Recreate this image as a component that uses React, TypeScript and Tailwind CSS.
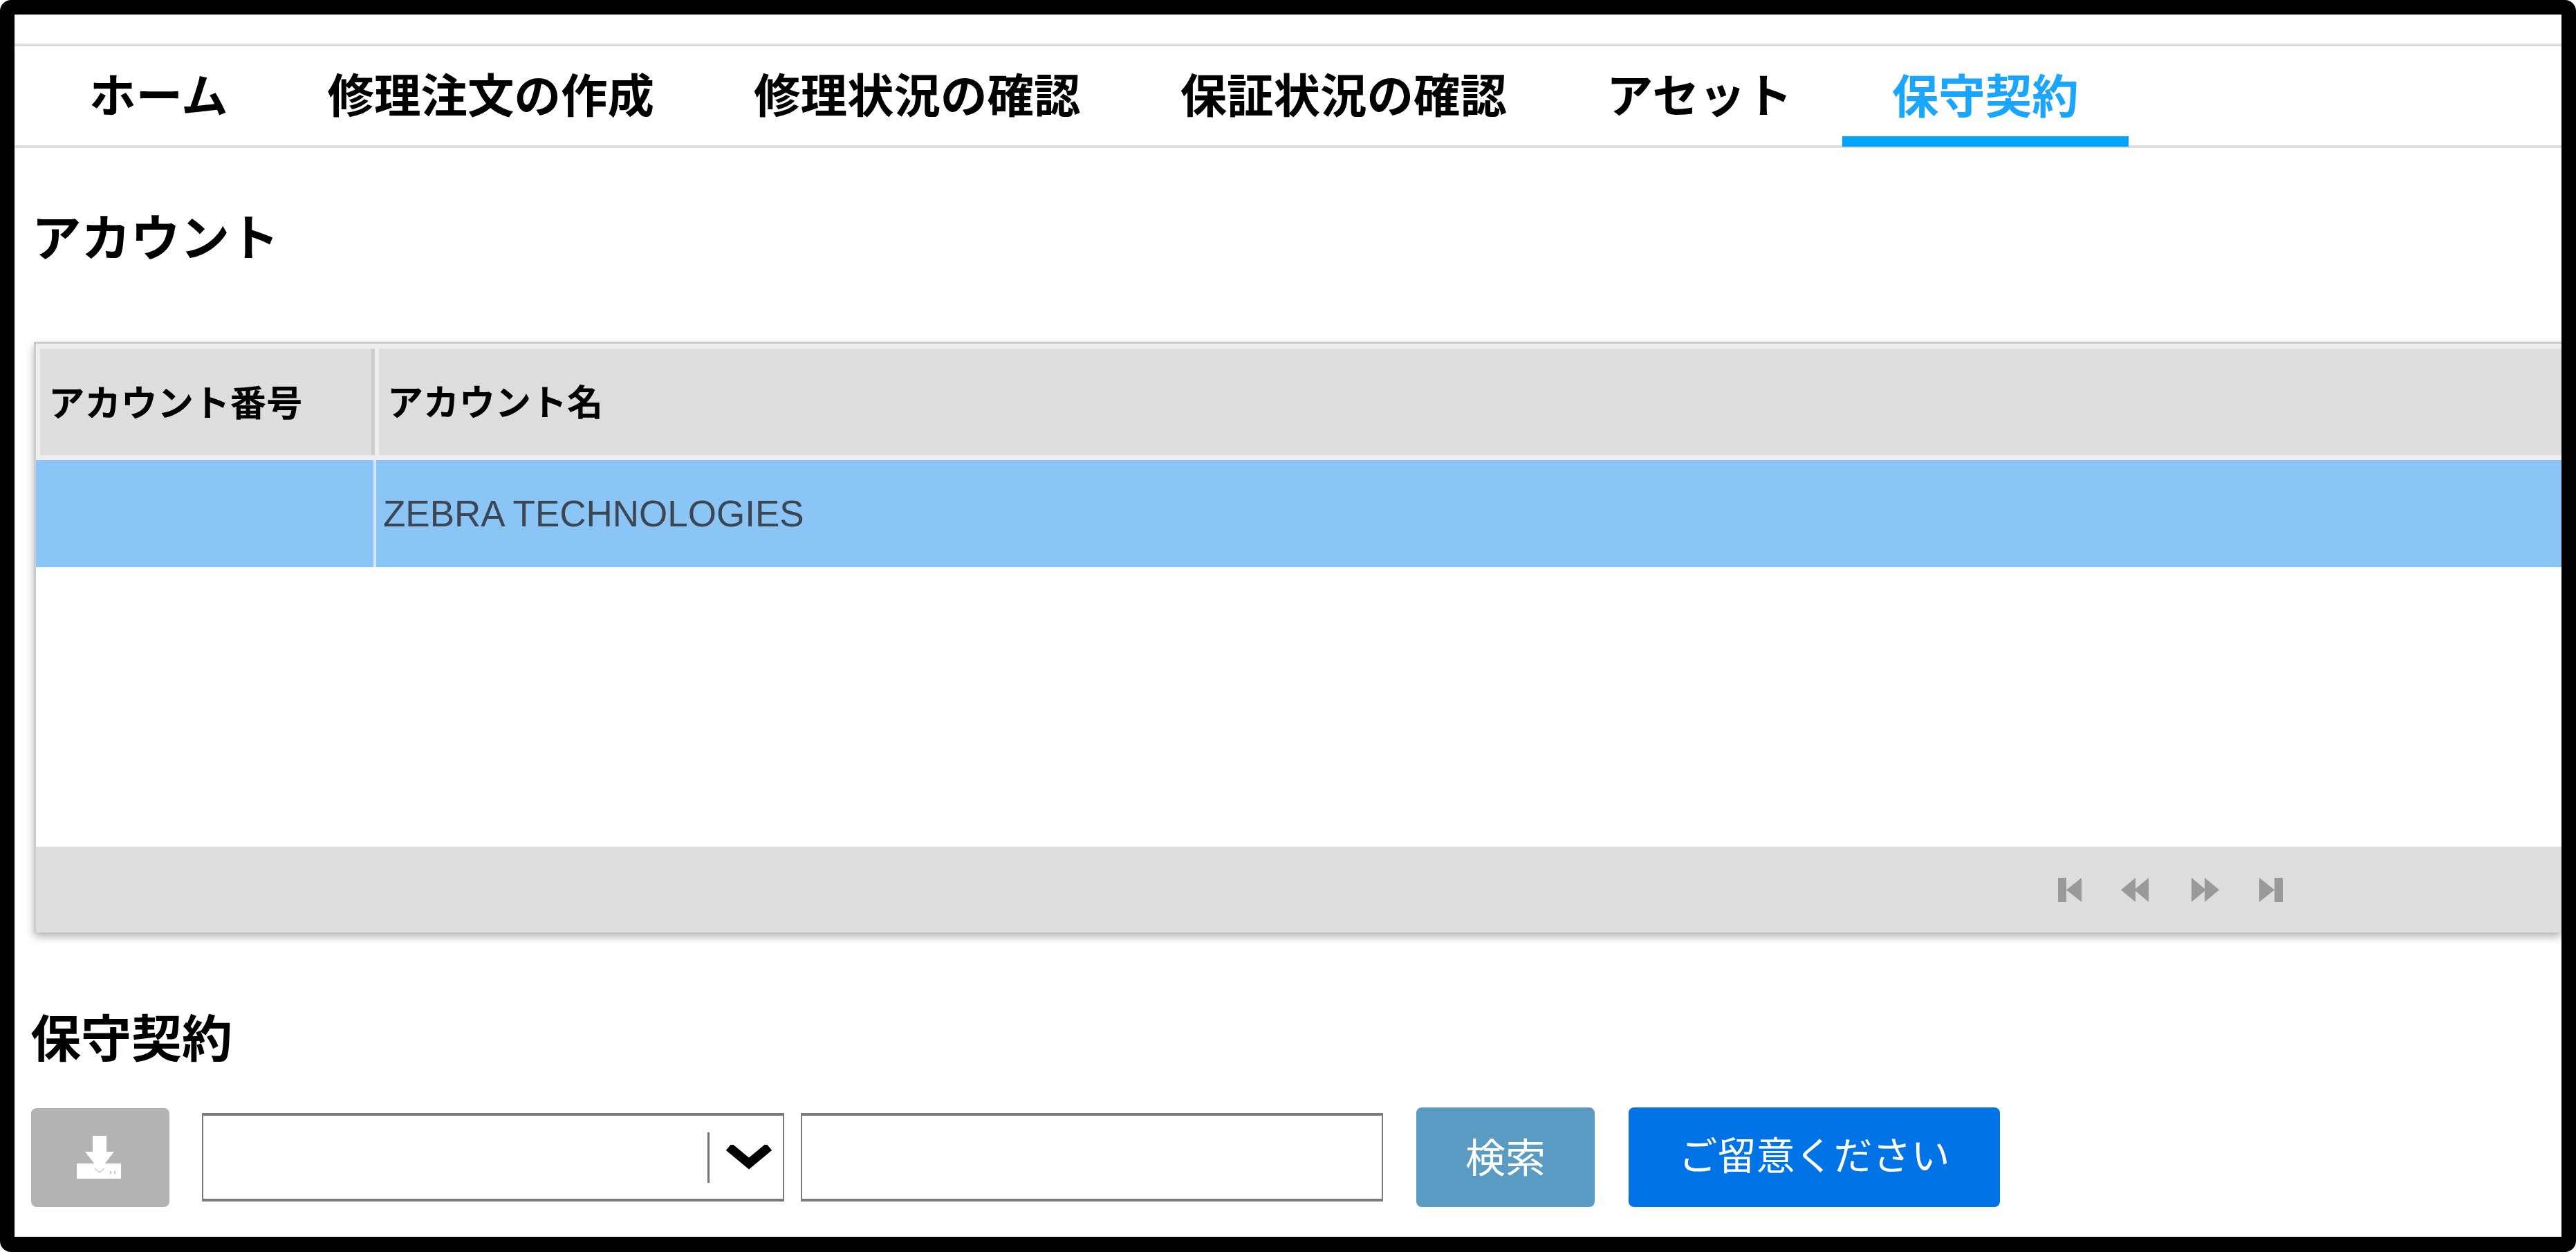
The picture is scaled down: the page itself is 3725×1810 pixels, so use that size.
const cjk = "font-['Noto_Sans_CJK_JP','Noto_Sans',sans-serif]";

const tabs = ["ホーム", "修理注文の作成", "修理状況の確認", "保証状況の確認", "アセット", "保守契約"];

function PagerIcon({ kind }: { kind: "first" | "prev" | "next" | "last" }) {
  // all four are drawn pointing left, the last two get mirrored
  const flip = kind === "next" || kind === "last";
  const single = kind === "first" || kind === "last";
  return (
    <svg
      width={single ? 34 : 40}
      height="35"
      viewBox={single ? "0 0 34 35" : "0 0 40 35"}
      className={flip ? "-scale-x-100" : ""}
      fill="#999999"
    >
      {single ? (
        <>
          <rect x="0" y="0" width="12" height="35" />
          <path d="M34 0 V35 L12 17.5 Z" />
        </>
      ) : (
        <>
          <path d="M21 0 V35 L0 17.5 Z" />
          <path d="M40 0 V35 L19 17.5 Z" />
        </>
      )}
    </svg>
  );
}

function DownloadIcon() {
  return (
    <svg width="64" height="62" viewBox="0 0 64 62">
      <rect x="0" y="40" width="64" height="22" fill="#ffffff" />
      <path d="M23 0 H43 V23 H54 L33 50 L12 23 H23 Z" fill="#ffffff" />
      <path d="M26 47 L33 53 L40 47" fill="none" stroke="#d4d4d4" strokeWidth="2" />
      <rect x="48" y="51" width="2" height="4" fill="#c4c4c4" />
      <rect x="54" y="51" width="2" height="4" fill="#c4c4c4" />
    </svg>
  );
}

export default function App() {
  return (
    <div className={`h-[1810px] w-[3725px] overflow-hidden rounded-[16px] bg-black pt-[21px] pr-[21px] pb-[22px] pl-[21px] ${cjk}`}>
      <div className="flex h-full flex-col overflow-hidden bg-white">
        {/* top nav */}
        <div className="mt-[42px] flex h-[151px] border-y-[4px] border-[#dedede] pl-[36px]">
          {tabs.map((t, i) => (
            <a
              key={t}
              className={
                i === 5
                  ? "-mb-[2px] flex h-[145px] items-center border-b-[15px] border-[#00a4ff] px-[72px] pt-[5px] text-[67.5px] leading-none font-bold text-[#1aa5ff]"
                  : "flex h-[143px] items-center px-[72px] pb-[10px] text-[67.5px] leading-none font-bold text-black"
              }
            >
              {t}
            </a>
          ))}
        </div>

        {/* account */}
        <h2 className="mt-[86px] ml-[25px] text-[71.5px] leading-[78px] font-bold text-black">アカウント</h2>

        <div className="mt-[116px] ml-[28px] border-t-[3px] border-l-[3px] border-[#cccccc] shadow-[0_6px_12px_rgba(0,0,0,0.3)]">
          <div className="flex h-[168px] bg-[#eeeeee] pt-[7px] pb-[7px] pl-[6px]">
            <div className="flex w-[484px] items-center border-r-[5px] border-[#cccccc] bg-[#dddddd] pb-[4px] pl-[12px] text-[52.5px] font-bold text-black">
              アカウント番号
            </div>
            <div className="ml-[6px] flex flex-1 items-center bg-[#dddddd] pb-[4px] pl-[12px] text-[52px] font-bold text-black">
              アカウント名
            </div>
          </div>
          <div className="flex h-[155px] bg-[#8ac5f6]">
            <div className="w-[492px] border-r-[4px] border-[#d5e8f8]" />
            <div className="flex flex-1 items-center pl-[10px] font-['Liberation_Sans',sans-serif] text-[53px] text-[#3b4654]">
              ZEBRA TECHNOLOGIES
            </div>
          </div>
          <div className="h-[404px] bg-white" />
          <div className="flex h-[124px] items-center bg-[#dddddd] pl-[2924px]">
            <PagerIcon kind="first" />
            <span className="ml-[57px] flex">
              <PagerIcon kind="prev" />
            </span>
            <span className="ml-[62px] flex">
              <PagerIcon kind="next" />
            </span>
            <span className="ml-[58px] flex">
              <PagerIcon kind="last" />
            </span>
          </div>
        </div>

        {/* contracts */}
        <h2 className="mt-[108px] ml-[23px] text-[73px] leading-[80px] font-bold text-black">保守契約</h2>

        <div className="mt-[65px] ml-[24px] flex items-center">
          <button className="flex h-[143px] w-[200px] items-center justify-center rounded-[8px] bg-[#b3b3b3] pr-[4px]">
            <DownloadIcon />
          </button>
          <div className="ml-[47px] flex h-[128px] w-[842px] items-center justify-end border-x-[2px] border-y-[4px] border-[#767b84] pr-[14px]">
            <div className="mr-[22px] h-[73px] w-[3px] bg-[#6f737a]" />
            <svg width="70" height="37" viewBox="0 0 70 37" fill="none">
              <path d="M6 3 L35 27 L64 3" stroke="#000000" strokeWidth="13" />
            </svg>
          </div>
          <input className="ml-[24px] h-[128px] w-[842px] border-x-[2px] border-y-[4px] border-[#767b84] bg-white" />
          <button className="ml-[48px] flex h-[144px] w-[258px] items-center justify-center rounded-[8px] bg-[#5a9bc4] pb-[6px] text-[58px] text-white">
            検索
          </button>
          <button className="ml-[49px] flex h-[144px] w-[537px] items-center justify-center rounded-[8px] bg-[#0073e6] pb-[12px] text-[56px] text-white">
            ご留意ください
          </button>
        </div>
      </div>
    </div>
  );
}
